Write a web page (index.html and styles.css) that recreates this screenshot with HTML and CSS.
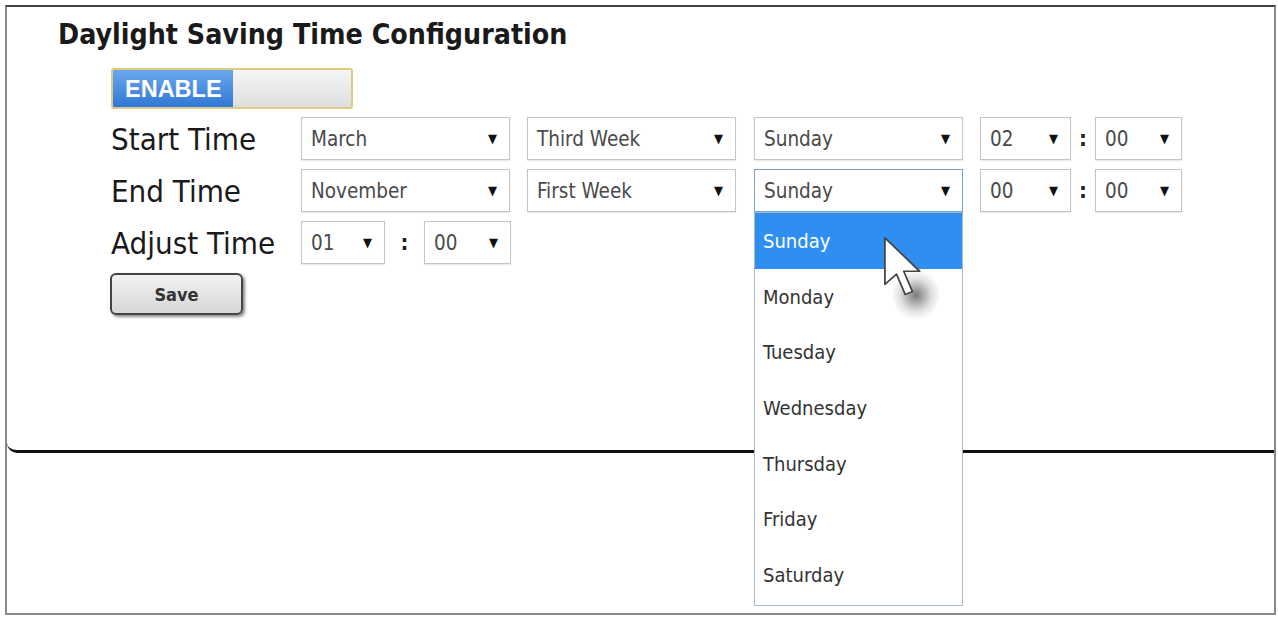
FILE: index.html
```html
<!DOCTYPE html>
<html lang="en">
<head>
  <meta charset="UTF-8" />
  <title>Daylight Saving Time Configuration</title>
  <link rel="stylesheet" href="styles.css">
</head>
<body>
  <div class="frame">
    <div class="panel">
      <h1>Daylight Saving Time Configuration</h1>

      <div class="form">
        <div class="toggle">
          <span class="toggle-on">ENABLE</span>
          <span class="toggle-off"></span>
        </div>

        <div class="row">
          <span class="label">Start Time</span>
          <div class="select wide"><span>March</span><i>▼</i></div>
          <div class="select wide"><span>Third Week</span><i>▼</i></div>
          <div class="select wide"><span>Sunday</span><i>▼</i></div>
          <div class="time">
            <div class="select small"><span>02</span><i>▼</i></div>
            <b class="colon">:</b>
            <div class="select small"><span>00</span><i>▼</i></div>
          </div>
        </div>

        <div class="row">
          <span class="label">End Time</span>
          <div class="select wide"><span>November</span><i>▼</i></div>
          <div class="select wide"><span>First Week</span><i>▼</i></div>
          <div class="select wide focused">
            <span>Sunday</span><i>▼</i>
            <!-- open dropdown list -->
            <ul class="options">
              <li class="selected">Sunday</li>
              <li>Monday</li>
              <li>Tuesday</li>
              <li>Wednesday</li>
              <li>Thursday</li>
              <li>Friday</li>
              <li>Saturday</li>
            </ul>
            <div class="cursor-shadow"></div>
            <svg class="cursor" width="58" height="87" viewBox="0 0 40 60">
              <path d="M2 2 L2 34 L10 27 L16 41 L21 39 L15 25 L26 25 Z" fill="#fff" stroke="#444" stroke-width="1.2" stroke-linejoin="round"/>
            </svg>
          </div>
          <div class="time">
            <div class="select small"><span>00</span><i>▼</i></div>
            <b class="colon">:</b>
            <div class="select small"><span>00</span><i>▼</i></div>
          </div>
        </div>

        <div class="row">
          <span class="label">Adjust Time</span>
          <div class="time adjust">
            <div class="select small"><span>01</span><i>▼</i></div>
            <b class="colon">:</b>
            <div class="select small"><span>00</span><i>▼</i></div>
          </div>
        </div>

        <button class="save">Save</button>
      </div>
    </div>
  </div>
</body>
</html>
```

FILE: styles.css
```css
html, body {
  margin: 0;
  background: #fff;
}

body {
  padding: 5px 2px 2px 5px;
  font-family: "DejaVu Sans Condensed", "DejaVu Sans", sans-serif;
  color: #222;
}

.frame {
  height: 606px;
  border-top: 2px solid #444;
  border-left: 2px solid #888;
  border-right: 2px solid #888;
  border-bottom: 2px solid #888;
}

.panel {
  height: 443px;
  border-bottom: 3px solid #111;
  border-bottom-left-radius: 10px;
}

h1 {
  margin: 0;
  padding: 12px 0 0 51px;
  font-size: 28.3px;
  line-height: 32px;
  font-weight: bold;
  color: #1a1a1a;
}

.form {
  padding: 17px 0 0 104px;
}

/* Enable switch */
.toggle {
  display: flex;
  width: 238px;
  height: 37px;
  border: 2px solid #dccb80;
  border-radius: 3px;
  margin-bottom: 8px;
  overflow: hidden;
}

.toggle-on {
  width: 120px;
  background: linear-gradient(to bottom, #6aa8ec, #2f78d6);
  color: #fff;
  font-family: "Liberation Sans", sans-serif;
  font-weight: bold;
  font-size: 23.5px;
  line-height: 38px;
  padding-left: 12px;
  box-sizing: border-box;
}

.toggle-off {
  flex: 1;
  background: linear-gradient(to bottom, #f6f6f6, #dedede);
}

/* Rows */
.row {
  display: flex;
  align-items: center;
  height: 43px;
  margin-bottom: 9px;
}

.label {
  width: 190px;
  font-size: 31px;
  color: #1a1a1a;
}

.select {
  position: relative;
  display: flex;
  align-items: center;
  justify-content: space-between;
  height: 43px;
  border: 1px solid #c4c4c4;
  box-shadow: 0 1px 1px rgba(0, 0, 0, 0.08);
  padding: 0 12px 0 9px;
  box-sizing: border-box;
  font-size: 20.5px;
  color: #4a4a4a;
  background: #fff;
}

.select i {
  font-style: normal;
  font-size: 13px;
  color: #111;
}

.select.wide {
  width: 209px;
  margin-right: 17px;
}

.select.wide + .select.wide {
  margin-right: 18px;
}

.select.wide + .select.wide + .select.wide {
  margin-right: 17px;
}

.select.small {
  width: 91px;
}

.select.small + .colon + .select.small {
  width: 87px;
}

.select.focused {
  border-color: #7f9fcc;
}

.time {
  display: flex;
  align-items: center;
}

.colon {
  width: 24px;
  text-align: center;
  font-size: 22px;
  color: #222;
}

.adjust .select.small {
  width: 84px;
}

.adjust .colon {
  width: 39px;
}

/* Open dropdown */
.options {
  position: absolute;
  top: 42px;
  left: -1px;
  width: 209px;
  margin: 0;
  padding: 0 0 2px;
  list-style: none;
  background: #fff;
  border: 1px solid #a9b8cf;
  box-sizing: border-box;
  z-index: 2;
}

.options li {
  height: 55.7px;
  line-height: 57px;
  padding-left: 8px;
  font-size: 20px;
  color: #333;
}

.options li.selected {
  background: #2e8ff0;
  color: #fff;
}

.cursor {
  position: absolute;
  top: 65px;
  left: 127px;
  z-index: 4;
}

.cursor-shadow {
  position: absolute;
  top: 100px;
  left: 136px;
  width: 50px;
  height: 50px;
  border-radius: 50%;
  background: radial-gradient(circle, rgba(80, 80, 80, 0.75), rgba(130, 130, 130, 0.25) 45%, rgba(160, 160, 160, 0) 70%);
  z-index: 3;
}

/* Save button */
.save {
  display: block;
  width: 133px;
  height: 42px;
  margin-top: 6px;
  margin-left: -1px;
  border: 2px solid #444;
  border-radius: 6px;
  background: linear-gradient(to bottom, #f2f2f2, #d6d6d6);
  box-shadow: 2px 2px 3px rgba(0, 0, 0, 0.45);
  font-family: "DejaVu Sans Condensed", sans-serif;
  font-weight: bold;
  font-size: 18px;
  color: #333;
}
```
